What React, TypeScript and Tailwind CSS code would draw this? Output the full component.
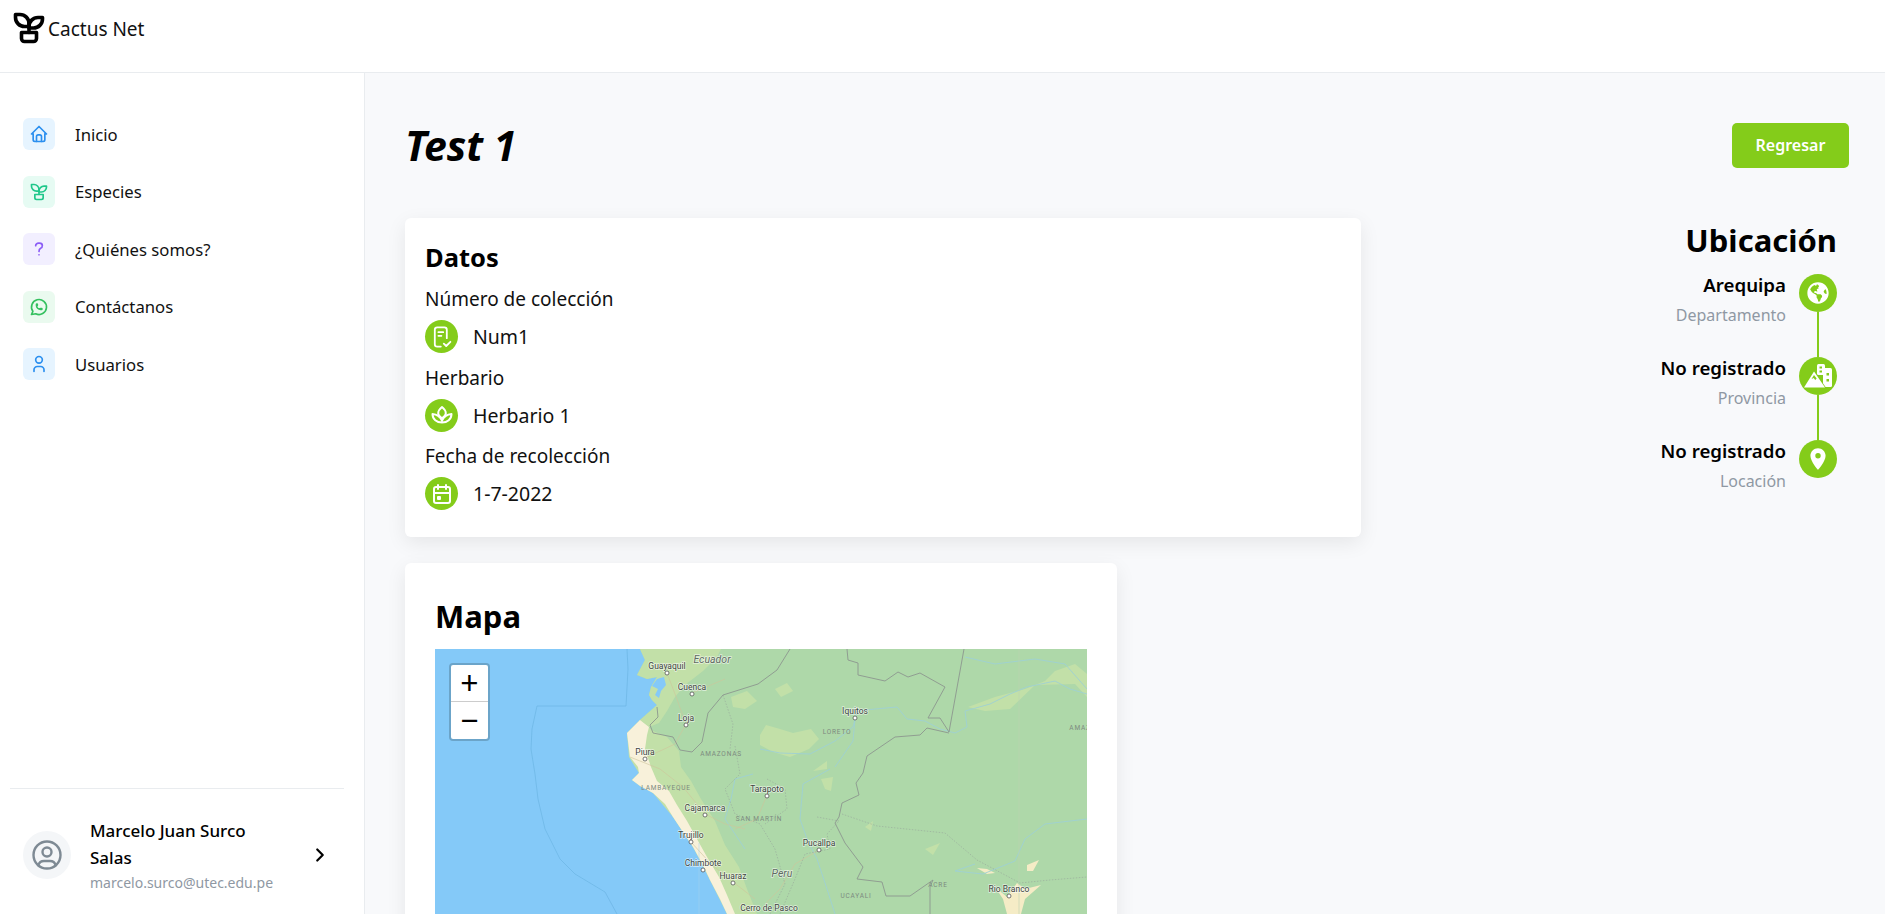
import type { ReactNode } from "react";
import {
  TbBrandWhatsapp,
  TbCalendarEvent,
  TbChevronRight,
  TbHome,
  TbPlant,
  TbQuestionMark,
  TbUser,
  TbUserCircle,
} from "react-icons/tb";
import { FaGlobeAmericas } from "react-icons/fa";
import { MdLocationOn } from "react-icons/md";

const nav = [
  { label: "Inicio", icon: <TbHome size={20} />, box: "bg-[#e6f4ff] text-[#2b8fef]" },
  { label: "Especies", icon: <TbPlant size={20} />, box: "bg-[#e6fbf3] text-[#1fc78a]" },
  { label: "¿Quiénes somos?", icon: <TbQuestionMark size={20} />, box: "bg-[#f2efff] text-[#8b5cf6]" },
  { label: "Contáctanos", icon: <TbBrandWhatsapp size={20} />, box: "bg-[#eafaef] text-[#34c05f]" },
  { label: "Usuarios", icon: <TbUser size={20} />, box: "bg-[#e6f4ff] text-[#2b8fef]" },
];

function ReceiptIcon() {
  return (
    <svg width="24" height="24" viewBox="0 0 20 20" fill="none" stroke="currentColor" strokeWidth="1.5" strokeLinecap="round" strokeLinejoin="round">
      <path d="M9 18H6a2 2 0 0 1-2-2V4a2 2 0 0 1 2-2h6a2 2 0 0 1 2 2v7" />
      <path d="M7 6h4M7 9h2.500" />
      <path d="M11.500 15.500l2 2 3.500-3.500" />
    </svg>
  );
}

function LotusIcon() {
  return (
    <svg width="24" height="24" viewBox="0 0 24 24" fill="none" stroke="currentColor" strokeWidth="2" strokeLinejoin="round">
      <path d="M12 4c2.500 2 3.800 4.200 3.800 6.300 0 2-1.500 3.700-3.800 5-2.300-1.300-3.800-3-3.800-5C8.200 8.200 9.500 6 12 4z" />
      <path d="M2.500 11c4.300.3 7.600 2.600 9.500 6.700 1.900-4.100 5.200-6.400 9.500-6.700 0 5.200-4.200 8.500-9.500 8.500S2.500 16.200 2.500 11z" />
    </svg>
  );
}

function CityMountainIcon() {
  return (
    <svg width="29" height="24" viewBox="0 0 29 24" fill="white">
      <rect x="13" y="0" width="8" height="11" rx="1.500" />
      <rect x="19" y="4" width="9" height="19" rx="1.500" />
      <g fill="#84cc1a">
        <rect x="15.500" y="2.500" width="2.500" height="2" />
        <rect x="15.500" y="6.500" width="2.500" height="2" />
        <rect x="22.500" y="9" width="2.500" height="2.500" />
        <rect x="22.500" y="15" width="2.500" height="2.500" />
      </g>
      <path d="M0 23.500 10 7.500 21 23.500z" stroke="#84cc1a" strokeWidth="1.500" paintOrder="stroke" />
      <path d="M10 11 7.500 15l2.200-1 1.500 2 1.500-1.500z" fill="#84cc1a" />
    </svg>
  );
}

function DataRow({ label, value, icon }: { label: string; value: string; icon: ReactNode }) {
  return (
    <div>
      <p className="text-[19px] leading-[25px]">{label}</p>
      <div className="mt-[8px] mb-[12.500px] flex items-center gap-[15px]">
        <span className="flex h-[33px] w-[33px] items-center justify-center rounded-full bg-[#84cc1a] text-white">
          {icon}
        </span>
        <span className="text-[19.500px] leading-[25px]">{value}</span>
      </div>
    </div>
  );
}

function LocationRow({ title, sub, icon, last }: { title: string; sub: string; icon: ReactNode; last?: boolean }) {
  return (
    <div className="flex justify-end gap-[13px]">
      <div className="-mt-[2px] text-right">
        <p className="text-[18.700px] font-semibold leading-[25px] text-black">{title}</p>
        <p className="mt-[6px] text-[16px] leading-[25px] text-[#8f98a3]">{sub}</p>
      </div>
      <div className="flex w-[38px] flex-col items-center">
        <span className="flex h-[38px] w-[38px] items-center justify-center rounded-full bg-[#84cc1a] text-white">
          {icon}
        </span>
        {!last && <span className="h-[45px] w-[2px] bg-[#84cc1a]" />}
      </div>
    </div>
  );
}

function MapLabel({ x, y, text, dot, italic }: { x: number; y: number; text: string; dot?: boolean; italic?: boolean }) {
  return (
    <g>
      <text
        x={x}
        y={y + 3}
        textAnchor="middle"
        fontSize={italic ? 10.5 : 8.5}
        fontStyle={italic ? "italic" : "normal"}
        fill={italic ? "#5f6b62" : "#3d4440"}
        stroke="#ffffff"
        strokeOpacity="0.6"
        strokeWidth="1.5"
        paintOrder="stroke"
      >
        {text}
      </text>
      {dot && <circle cx={x} cy={y + 7} r="2" fill="#fff" stroke="#555" strokeWidth="0.8" />}
    </g>
  );
}

function RegionLabel({ x, y, text }: { x: number; y: number; text: string }) {
  return (
    <text x={x} y={y + 2.500} textAnchor="middle" fontSize="6.500" letterSpacing="0.8" fill="#7d8a80">
      {text}
    </text>
  );
}

function PeruMap() {
  return (
    <svg viewBox="0 0 652 265" className="block h-full w-full" style={{ fontFamily: "Roboto, sans-serif" }}>
      <defs>
        <filter id="soft" x="0" y="0" width="100%" height="100%">
          <feGaussianBlur stdDeviation="0.6" />
        </filter>
      </defs>
      <rect width="652" height="265" fill="#84c9f8" />
      {/* sea limits */}
      <path d="M191 57H102L97 80 96 100 100 125 103 150 110 180 125 210 140 225 170 243 182 265M191 57 193 20 192 0" fill="none" stroke="#6fb8e6" strokeWidth="0.8" />
      {/* land */}
      <g filter="url(#soft)">
        <path d="M205 0 210 11 202 26 212 30 222 28 216 38 214 46 217 51 222 56 205 71 192 84 194 100 195 108 203 118 204 124 197 131 205 137 218 144 230 155 238 168 250 186 258 198 268 216 275 231 285 250 292 265H652V0Z" fill="#aed8a9" />
        {/* light green bands */}
        <path d="M205 0 210 11 202 26 212 30 222 28 216 38 214 46 217 51 222 56 205 71 214 78 224 74 232 62 240 48 250 36 268 22 282 8 286 0Z" fill="#c2e0a8" />
        <path d="M205 71 192 84 194 108 204 124 197 131 218 144 238 168 258 198 275 231 292 265H322L312 240 304 218 290 196 280 172 266 150 256 132 246 118 244 102 232 88 218 82Z" fill="#c2e0a8" />
        {/* coast desert */}
        <path d="M205 71 192 84 194 100 195 108 203 118 204 124 197 131 205 137 218 144 230 155 238 168 250 186 258 198 268 216 275 231 285 250 292 265H300L292 246 284 228 272 208 262 190 252 172 242 156 234 142 222 132 216 118 210 100 212 86 214 78Z" fill="#f8f1da" />
        {/* gulf */}
        <path d="M222 30 229 28 231 36 226 42 224 49 220 46 223 40 217 37Z" fill="#84c9f8" />
        {/* lighter patches */}
        <g fill="#c2e0a8">
          <path d="M325 86 331 76 345 80 358 84 376 80 384 90 374 100 355 108 338 103 325 96Z" />
          <path d="M378 122 392 112 392 120Z" />
          <path d="M386 130 398 128 396 142 390 140Z" />
          <path d="M533 58 560 48 590 40 610 32 620 22 640 15 652 25 652 48 640 35 600 36 575 60 550 62Z" />
          <path d="M430 178 438 172 436 182Z" />
          <path d="M490 200 505 194 498 206Z" />
          <path d="M296 48 312 42 322 52 310 60 298 58Z" />
          <path d="M340 40 352 34 358 42 346 48Z" />
        </g>
        {/* urban and dry spots */}
        <g fill="#f5ecc6">
          <path d="M542 219 552 220 560 224 552 225Z" />
          <path d="M592 216 604 211 598 222 592 222Z" />
          <path d="M560 238 572 248 582 234 590 240 606 236 590 250 586 265H572L568 250Z" />
        </g>
      </g>
      {/* rivers */}
      <g fill="none" stroke="#9ed0d4" strokeWidth="0.9">
        <path d="M325 100 345 104 375 105 400 92 418 78 422 62 440 60 462 58 472 70 490 72 505 80 520 84 532 78 530 62 555 55 575 45 592 38 620 32 635 40 652 45" />
        <path d="M530 8 560 15 600 10 630 15 652 40" />
        <path d="M395 120 368 135 365 170 372 190 382 210 392 240 400 265" />
        <path d="M420 70 418 92 400 118" />
        <path d="M540 215 520 222 548 225 580 212 590 190 610 175 652 170" />
        <path d="M318 125 300 130 296 150 290 170 310 200" />
      </g>
      {/* state and road traces */}
      <g fill="none" stroke="#cfc59b" strokeWidth="0.6">
        <path d="M195 108 225 120 248 138 270 165 290 175 310 180M256 193 276 215 298 233 320 250M332 146 322 170 300 180M384 201 360 215 345 240 330 255M232 24 240 45 251 75 240 95 210 109M257 44 290 30" />
      </g>
      <g fill="none" stroke="#97a69b" strokeWidth="0.6" strokeDasharray="1.500 1.500">
        <path d="M407 165 442 177 510 184 542 211 585 234 615 231 652 228" />
        <path d="M382 168 404 172 392 185 395 200 370 205 360 230 345 265" />
        <path d="M300 97 305 125 290 140 300 165 325 175 340 200 350 235 335 265" />
        <path d="M332 130 350 140 352 160 330 175" />
        <path d="M288 46 298 75 295 100" />
      </g>
      {/* international borders */}
      <g fill="none" stroke="#8c968e" strokeWidth="0.9">
        <path d="M355 0 342 21 323 35 288 46 278 58 273 64 267 93 257 103 245 101 238 88 218 84 215 76 223 68 222 58" />
        <path d="M412 0 413 11 423 14 423 26 450 32 463 23 473 28 485 24 510 38 493 69 505 69 514 83 529 0" />
        <path d="M514 84 492 79 485 86 460 88 432 107 428 124 421 134 424 146 407 154 404 168 400 174 410 194 428 218 422 230 447 233 451 247 475 247 498 231 495 238 495 265" />
      </g>
      <path d="M584 0V265" stroke="#bcd3b4" strokeWidth="0.6" />
      <path d="M264 194V265" stroke="#a4d3ef" strokeWidth="0.5" />

      <MapLabel x={232} y={17} text="Guayaquil" dot />
      <MapLabel x={277} y={11} text="Ecuador" italic />
      <MapLabel x={257} y={38} text="Cuenca" dot />
      <MapLabel x={251} y={69} text="Loja" dot />
      <MapLabel x={210} y={103} text="Piura" dot />
      <MapLabel x={332} y={140} text="Tarapoto" dot />
      <MapLabel x={270} y={159} text="Cajamarca" dot />
      <MapLabel x={256} y={186} text="Trujillo" dot />
      <MapLabel x={384} y={194} text="Pucallpa" dot />
      <MapLabel x={268} y={214} text="Chimbote" dot />
      <MapLabel x={298} y={227} text="Huaraz" dot />
      <MapLabel x={347} y={225} text="Peru" italic />
      <MapLabel x={334} y={259} text="Cerro de Pasco" />
      <MapLabel x={420} y={62} text="Iquitos" dot />
      <MapLabel x={574} y={240} text="Rio Branco" dot />
      <RegionLabel x={286} y={104} text="AMAZONAS" />
      <RegionLabel x={231} y={138} text="LAMBAYEQUE" />
      <RegionLabel x={324} y={169} text="SAN MARTÍN" />
      <RegionLabel x={402} y={82} text="LORETO" />
      <RegionLabel x={421} y={246} text="UCAYALI" />
      <RegionLabel x={503} y={235} text="ACRE" />
      <RegionLabel x={645} y={78} text="AMAZ" />
    </svg>
  );
}

export default function App() {
  return (
    <div className="flex h-screen flex-col overflow-hidden bg-[#f8f9fb] font-['Noto_Sans',sans-serif] text-[#111]">
      <header className="flex h-[73px] shrink-0 items-start border-b border-[#e9ecef] bg-white pl-[11px] pt-[10px]">
        <TbPlant size={36} strokeWidth={2.4} className="text-black" />
        <span className="ml-[1px] mt-[7px] text-[19px] leading-[25px]">Cactus Net</span>
      </header>

      <div className="flex min-h-0 flex-1">
        <aside className="flex w-[365px] shrink-0 flex-col justify-between border-r border-[#e9ecef] bg-white">
          <nav className="flex flex-col gap-[25.500px] pl-[23px] pt-[45px]">
            {nav.map((item) => (
              <div key={item.label} className="flex items-center gap-[20px]">
                <span className={`flex h-[32px] w-[32px] items-center justify-center rounded-[6px] ${item.box}`}>
                  {item.icon}
                </span>
                <span className="pt-[1px] text-[16.700px] leading-[24px]">{item.label}</span>
              </div>
            ))}
          </nav>

          <div className="mx-[10px] mr-[20px] flex items-center border-t border-[#e9ecef] pb-[21px] pl-[13px] pt-[28px]">
            <span className="flex h-[48px] w-[48px] items-center justify-center rounded-full bg-[#f4f6f8] text-[#7e8a94]">
              <TbUserCircle size={36} strokeWidth={1.6} />
            </span>
            <div className="ml-[19px] w-[180px]">
              <p className="text-[17px] font-medium leading-[27px] text-black">Marcelo Juan Surco Salas</p>
              <p className="mt-[2px] text-[14px] leading-[20px] text-[#8f98a3]">marcelo.surco@utec.edu.pe</p>
            </div>
            <TbChevronRight size={22} strokeWidth={2.4} className="ml-[39px] text-black" />
          </div>
        </aside>

        <main className="min-w-0 flex-1 pl-[40px] pr-[36px] pt-[47px]">
          <div className="flex items-center justify-between">
            <h1 className="text-[41px] font-bold italic leading-[50px] text-black">Test 1</h1>
            <button className="h-[45px] w-[117px] rounded-[5px] bg-[#84cc1a] text-[16px] font-semibold text-white">
              Regresar
            </button>
          </div>

          <div className="mt-[48px] flex items-start justify-between pr-[12px]">
            <div>
              <section className="w-[956px] rounded-[6px] bg-white px-[20px] pb-[14px] pt-[21px] shadow-[0_6px_20px_rgba(0,0,0,0.08)]">
                <h2 className="mb-[12px] text-[25.500px] font-bold leading-[36px] text-black">Datos</h2>
                <DataRow label="Número de colección" value="Num1" icon={<ReceiptIcon />} />
                <DataRow label="Herbario" value="Herbario 1" icon={<LotusIcon />} />
                <DataRow label="Fecha de recolección" value="1-7-2022" icon={<TbCalendarEvent size={24} />} />
              </section>

              <section className="mt-[26px] w-[712px] rounded-[6px] bg-white px-[30px] pt-[30px] shadow-[0_6px_20px_rgba(0,0,0,0.08)]">
                <h2 className="mb-[10px] text-[31px] font-bold leading-[46px] text-black">Mapa</h2>
                <div className="relative h-[400px] w-[652px]">
                  <div className="h-[265px]">
                    <PeruMap />
                  </div>
                  <div className="absolute left-[14px] top-[14px] flex w-[41px] flex-col rounded-[4px] border-2 border-[#6ba4c9] bg-white text-black">
                    <span className="flex h-[37px] items-center justify-center border-b border-[#ccc] text-[32px] leading-none">+</span>
                    <span className="flex h-[37px] items-center justify-center text-[32px] leading-none">−</span>
                  </div>
                </div>
              </section>
            </div>

            <aside>
              <h2 className="mb-[12px] text-right text-[31px] font-bold leading-[44px] text-black">Ubicación</h2>
              <LocationRow title="Arequipa" sub="Departamento" icon={<FaGlobeAmericas size={22} />} />
              <LocationRow title="No registrado" sub="Provincia" icon={<CityMountainIcon />} />
              <LocationRow title="No registrado" sub="Locación" icon={<MdLocationOn size={26} />} last />
            </aside>
          </div>
        </main>
      </div>
    </div>
  );
}
